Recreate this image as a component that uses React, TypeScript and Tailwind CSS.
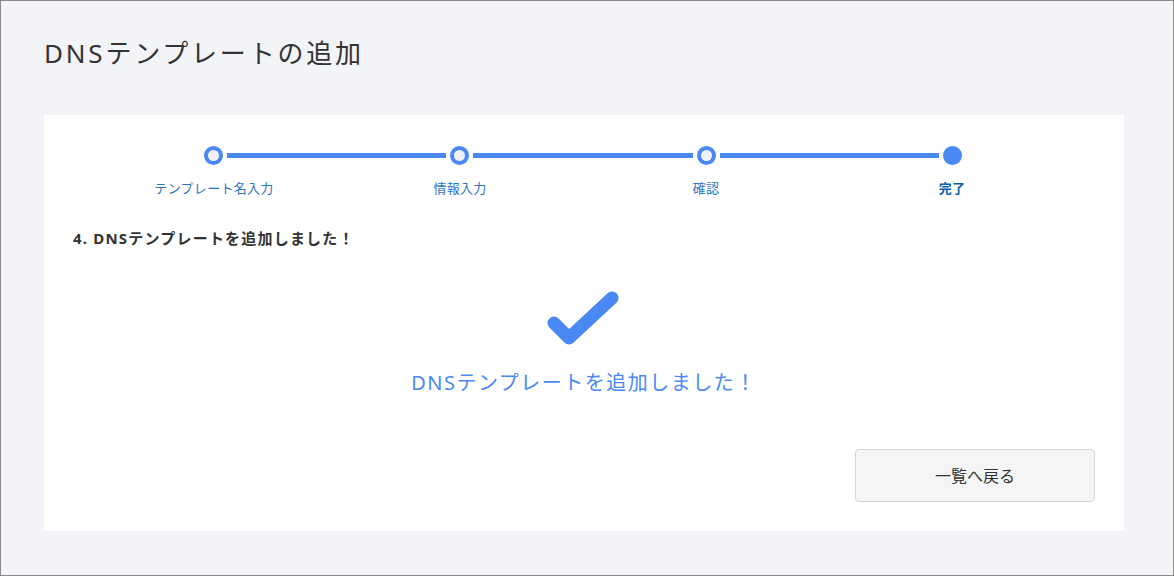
import React from "react";

const steps = ["テンプレート名入力", "情報入力", "確認", "完了"];

const font = { fontFamily: '"Noto Sans", "Noto Sans CJK JP", sans-serif' };

const StepDot = ({ done }: { done?: boolean }) =>
  done ? (
    <div className="w-[19px] h-[19px] rounded-full bg-[#4a89f3] shrink-0" />
  ) : (
    <div className="w-[19px] h-[19px] rounded-full border-[4px] border-[#4a89f3] bg-[#f1f2f6] shrink-0" />
  );

const Stepper = () => (
  <div className="ml-[18px] mr-[20px]">
    <div className="flex items-center px-[113px]">
      <StepDot />
      <div className="flex-1 h-[5px] bg-[#4a89f3] mx-[4px]" />
      <StepDot />
      <div className="flex-1 h-[5px] bg-[#4a89f3] mx-[4px]" />
      <StepDot />
      <div className="flex-1 h-[5px] bg-[#4a89f3] mx-[4px]" />
      <StepDot done />
    </div>
    <div className="grid grid-cols-4 mt-[13px]">
      {steps.map((s, i) => (
        <div
          key={s}
          className={`text-center text-[13px] leading-[20px] tracking-[0.3px] ${
            i === 3 ? "font-bold text-[#0b5cad]" : "text-[#2a72c4]"
          }`}
        >
          {s}
        </div>
      ))}
    </div>
  </div>
);

const App = () => {
  return (
    <div
      className="h-[576px] border border-[#8a8a8a] bg-[#f3f4f7] pl-[43px] pr-[49px] pt-[34px] text-[#333]"
      style={font}
    >
      <h1 className="text-[26px] leading-[36px] tracking-[2.8px] text-[#333] mb-[44px]">
        DNSテンプレートの追加
      </h1>

      <div className="bg-white pt-[31px] pb-[29px] px-[29px]">
        <Stepper />

        <div className="mt-[30px] text-[15px] leading-[20px] font-bold tracking-[1.2px] text-[#333]">
          4. DNSテンプレートを追加しました！
        </div>

        <div className="flex flex-col items-center">
          <svg width="76" height="56" viewBox="0 0 76 56" className="mt-[41px]">
            <polyline
              points="8,34 23,49 66,9"
              fill="none"
              stroke="#4a89f3"
              strokeWidth="13"
              strokeLinecap="round"
              strokeLinejoin="round"
            />
          </svg>
          <div className="mt-[24px] text-[20px] leading-[28px] tracking-[1.5px] text-[#4a89f3]">
            DNSテンプレートを追加しました！
          </div>
        </div>

        <div className="flex justify-end mt-[52px]">
          <button className="w-[240px] h-[53px] bg-[#f5f5f5] border border-[#d4d4d4] rounded-[4px] text-[16px] text-[#333]">
            一覧へ戻る
          </button>
        </div>
      </div>
    </div>
  );
};

export default App;
